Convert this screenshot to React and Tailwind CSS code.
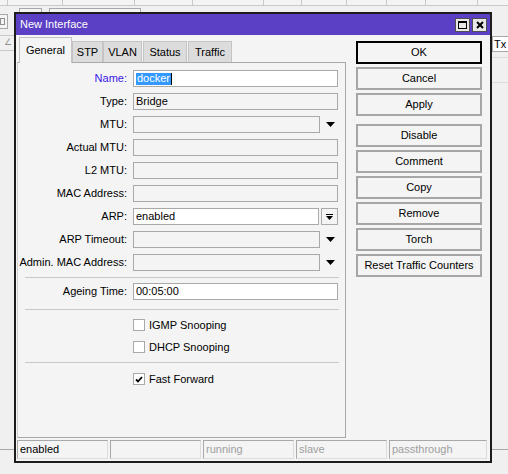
import React from 'react';

const Arrow = () => (
  <svg width="9" height="5" viewBox="0 0 9 5">
    <polygon points="0,0 9,0 4.5,5" fill="#000" />
  </svg>
);

const Field = ({ label, value, white, dropdown, button, labelClass = 'text-black', selected }) => (
  <div className="flex items-center h-[17px] mb-[6px]">
    <div className={`w-[110px] pr-[1px] text-right leading-none ${labelClass}`}>{label}</div>
    <div className="ml-[5px] flex items-center">
      <div
        className={`h-[17px] border border-[#a9a9a9] flex items-center pl-[2px] leading-none ${white ? 'bg-white' : 'bg-[#f4f4f4]'} ${dropdown ? 'w-[187px]' : button ? 'w-[186px]' : 'w-[205px]'}`}
      >
        {selected ? (
          <span className="flex items-center">
            <span className="bg-[#3399ff] text-white px-[1px] h-[12px] flex items-center">{value}</span>
            <span className="w-px h-[12px] bg-black" />
          </span>
        ) : (
          value
        )}
      </div>
      {dropdown && (
        <div className="w-[18px] flex justify-center pl-[2px]">
          <Arrow />
        </div>
      )}
      {button && (
        <div className="ml-[2px] w-[17px] h-[17px] border border-[#a9a9a9] bg-[#f4f4f4] flex items-center justify-center">
          <svg width="7" height="6" viewBox="0 0 7 6">
            <rect x="0" y="0" width="7" height="1" fill="#000" />
            <polygon points="0,2 7,2 3.5,6" fill="#000" />
          </svg>
        </div>
      )}
    </div>
  </div>
);

const Check = ({ label, checked, mt }) => (
  <div className={`flex items-center h-[12px] ${mt}`}>
    <div className="ml-[115px] w-[12px] h-[12px] border border-[#a9a9a9] bg-white flex items-center justify-center">
      {checked && (
        <svg width="8" height="7" viewBox="0 0 8 7">
          <path d="M1 3.5 L3 5.5 L7 1" stroke="#000" strokeWidth="1.8" fill="none" />
        </svg>
      )}
    </div>
    <span className="ml-[4px] leading-none">{label}</span>
  </div>
);

const Btn = ({ children, primary, mt = 'mt-[3px]' }) => (
  <div
    className={`w-[126px] h-[23px] flex items-center justify-center bg-[#f4f4f4] border-2 ${primary ? 'border-black' : 'border-[#a6a6a6]'} ${mt}`}
  >
    {children}
  </div>
);

const StatusCell = ({ children, w = 'w-[91px]', dim }) => (
  <div
    className={`${w} h-[19px] border border-[#a8a8a8] border-r-[#dcdcdc] border-b-[#dcdcdc] flex items-center pl-[2px] leading-none ${dim ? 'text-[#a0a0a0]' : 'text-black'}`}
  >
    {children}
  </div>
);

export default function App() {
  const tabs = [
    { name: 'STP', w: 'w-[31px]', ml: 'ml-[0px]' },
    { name: 'VLAN', w: 'w-[39px]', ml: 'ml-[0px]' },
    { name: 'Status', w: 'w-[44px]', ml: 'ml-[1px]' },
    { name: 'Traffic', w: 'w-[44px]', ml: 'ml-[1px]' },
  ];

  return (
    <div className="relative w-[508px] h-[474px] overflow-hidden bg-[#f0f0f0] font-['Liberation_Sans',Arial,sans-serif] text-[11px] text-black">
      {/* background list header */}
      <div className="absolute top-0 left-0 w-[508px] h-[6px] flex border-b border-[#c8c8c8] bg-[#f4f4f4]">
        <div className="w-[8px] border-r border-[#c8c8c8]" />
        <div className="w-[55px] border-r border-[#c8c8c8]" />
        <div className="w-[72px] border-r border-[#c8c8c8]" />
        <div className="w-[58px] border-r border-[#c8c8c8]" />
        <div className="w-[71px] border-r border-[#c8c8c8]" />
        <div className="w-[38px] border-r border-[#c8c8c8]" />
        <div className="w-[45px] border-r border-[#c8c8c8]" />
        <div className="w-[40px] border-r border-[#c8c8c8]" />
        <div className="w-[39px] border-r border-[#c8c8c8]" />
        <div className="w-[52px] border-r border-[#c8c8c8]" />
      </div>
      {/* toolbar pieces behind window */}
      <div className="absolute left-[19px] top-[8px] w-[23px] h-[10px] border border-[#a8a8a8] bg-[#f4f4f4]" />
      <div className="absolute left-[49px] top-[8px] w-[92px] h-[10px] border border-[#a8a8a8] bg-[#f4f4f4]" />
      <div className="absolute left-0 top-[14px] w-[8px] h-[15px] border border-l-0 border-[#a8a8a8] bg-[#f4f4f4] flex items-center">
        <div className="w-[5px] h-[7px] border border-[#909090]" />
      </div>
      <div className="absolute left-0 top-[35px] w-[14px] h-[16px] border-t border-b border-[#c8c8c8] text-[#909090] text-[9px] flex items-center justify-end pr-[2px]">
        ∠
      </div>
      {/* right list header */}
      <div className="absolute left-[492px] top-[36px] w-[20px] h-[16px] border border-[#a8a8a8] bg-white flex items-center pl-[1px] leading-none">
        Tx
      </div>
      <div className="absolute left-[492px] top-[57px] w-[16px] h-px bg-[#dcdcdc]" />
      <div className="absolute left-[492px] top-[82px] w-[16px] h-px bg-[#dcdcdc]" />
      <div className="absolute left-0 top-[449px] w-[508px] h-px bg-[#a8a8a8]" />

      {/* dialog window */}
      <div className="absolute left-[14px] top-[12px] w-[478px] h-[451px] border-2 border-[#1c1c1c] bg-[#f4f4f4] flex flex-col">
        <div className="h-[21px] bg-[#5b3fc4] flex items-center justify-between pl-[4px] pr-[3px]">
          <span className="text-white text-[11px] leading-none">New Interface</span>
          <div className="flex items-center gap-[2px]">
            <div className="w-[15px] h-[14px] border border-[#505050] bg-[#e8e8e8] flex items-center justify-center">
              <div className="w-[9px] h-[8px] border border-black border-t-2" />
            </div>
            <div className="w-[15px] h-[14px] border border-[#505050] bg-[#e8e8e8] flex items-center justify-center">
              <svg width="8" height="8" viewBox="0 0 8 8">
                <path d="M1 1 L7 7 M7 1 L1 7" stroke="#000" strokeWidth="2" />
              </svg>
            </div>
          </div>
        </div>

        <div className="flex">
          <div className="ml-[1px] w-[329px] flex flex-col">
            <div className="mt-[2px] h-[25px] flex items-end pl-[2px]">
              <div className="relative z-10 w-[53px] h-[26px] -mb-px border border-b-0 border-[#c4c4c4] bg-[#f4f4f4] flex items-center justify-center leading-none">
                General
              </div>
              {tabs.map((t) => (
                <div
                  key={t.name}
                  className={`${t.w} ${t.ml} h-[21px] border border-b-0 border-[#c4c4c4] bg-[#dcdcdc] flex items-center justify-center leading-none`}
                >
                  {t.name}
                </div>
              ))}
            </div>
            <div className="h-[376px] border border-[#a8a8a8] border-l-[#d0d0d0] flex flex-col pt-[7px]">
              <Field label="Name:" value="docker" white selected labelClass="text-[#3a17e8]" />
              <Field label="Type:" value="Bridge" />
              <Field label="MTU:" dropdown />
              <Field label="Actual MTU:" />
              <Field label="L2 MTU:" />
              <Field label="MAC Address:" />
              <Field label="ARP:" value="enabled" white button />
              <Field label="ARP Timeout:" dropdown />
              <Field label="Admin. MAC Address:" dropdown />
              <div className="ml-[7px] mr-[6px] h-px bg-[#c8c8c8]" />
              <div className="mt-[5px]">
                <Field label="Ageing Time:" value="00:05:00" white />
              </div>
              <div className="mt-[3px] ml-[7px] mr-[6px] h-px bg-[#c8c8c8]" />
              <Check label="IGMP Snooping" mt="mt-[9px]" />
              <Check label="DHCP Snooping" mt="mt-[10px]" />
              <div className="mt-[9px] ml-[7px] mr-[6px] h-px bg-[#c8c8c8]" />
              <Check label="Fast Forward" checked mt="mt-[10px]" />
            </div>
          </div>

          <div className="ml-[10px] mt-[6px] flex flex-col">
            <Btn primary mt="mt-0">OK</Btn>
            <Btn>Cancel</Btn>
            <Btn>Apply</Btn>
            <Btn mt="mt-[8px]">Disable</Btn>
            <Btn>Comment</Btn>
            <Btn>Copy</Btn>
            <Btn>Remove</Btn>
            <Btn>Torch</Btn>
            <Btn>Reset Traffic Counters</Btn>
          </div>
        </div>

        <div className="mt-[2px] ml-[1px] flex gap-[2px]">
          <StatusCell>enabled</StatusCell>
          <StatusCell />
          <StatusCell dim>running</StatusCell>
          <StatusCell dim>slave</StatusCell>
          <StatusCell w="w-[98px]" dim>passthrough</StatusCell>
        </div>
      </div>
    </div>
  );
}
